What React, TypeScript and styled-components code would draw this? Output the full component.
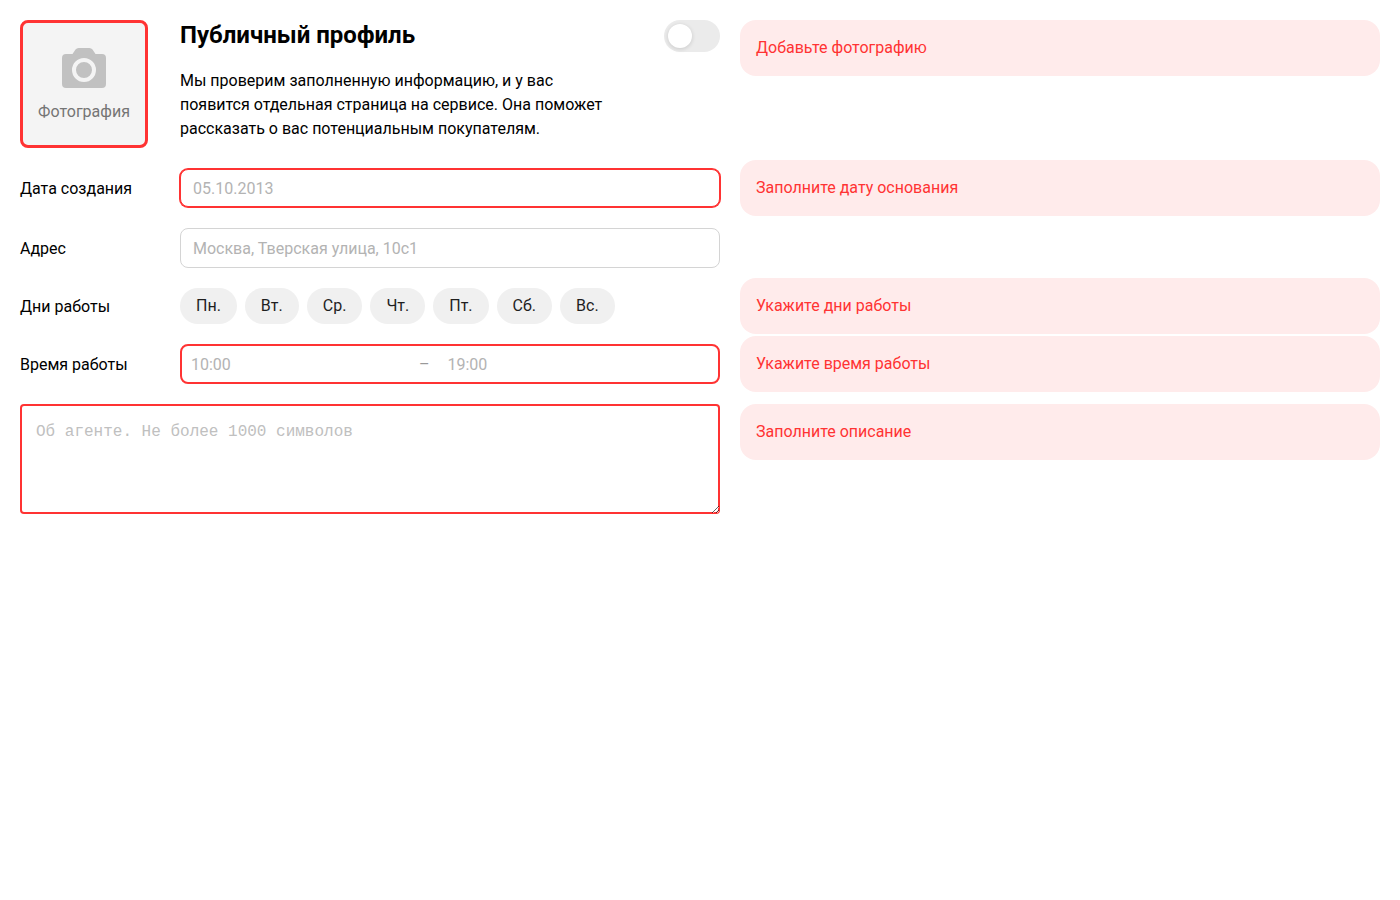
import React, { useState } from "react";
import styled, { createGlobalStyle } from "styled-components";

const red = "#ff3333";

const GlobalStyle = createGlobalStyle`
  *, *::before, *::after { box-sizing: border-box; }
  body {
    margin: 0;
    background: #fff;
    color: #000;
    font: 16px/24px Roboto, "Noto Sans", sans-serif;
  }
  button, input { font: inherit; color: inherit; }
`;

const Form = styled.form`
  display: flex;
  flex-direction: column;
  gap: 20px;
  padding: 20px;
`;

const Row = styled.div<{ $top?: boolean }>`
  display: grid;
  grid-template-columns: minmax(0, 700px) minmax(0, 1fr);
  column-gap: 20px;
  align-items: ${(p) => (p.$top ? "start" : "center")};
`;

const Field = styled.div<{ $top?: boolean }>`
  display: grid;
  grid-template-columns: 160px minmax(0, 1fr);
  align-items: ${(p) => (p.$top ? "start" : "center")};
`;

const Label = styled.label`
  padding-top: 2px;
`;

const Hint = styled.p<{ $overhang?: boolean }>`
  margin: ${(p) => (p.$overhang ? "-10px 0" : "0")};
  padding: 16px;
  border-radius: 16px;
  background: #ffebeb;
  color: ${red};
`;

const PhotoButton = styled.button`
  display: flex;
  flex-direction: column;
  align-items: center;
  gap: 12px;
  width: 128px;
  height: 128px;
  padding: 25px 0 0;
  border: 3px solid ${red};
  border-radius: 8px;
  background: #f4f4f4;
  color: #757575;
  cursor: pointer;
`;

const About = styled.div`
  display: flex;
  justify-content: space-between;
  align-items: flex-start;
`;

const Title = styled.h2`
  margin: 0 0 19px;
  font-size: 24px;
  line-height: 30px;
  font-weight: 700;
`;

const Description = styled.p`
  max-width: 430px;
  margin: 0;
`;

const Toggle = styled.input`
  appearance: none;
  flex: none;
  width: 56px;
  height: 32px;
  margin: 0;
  padding: 4px;
  border-radius: 16px;
  background: #ebebeb;
  cursor: pointer;

  &::before {
    content: "";
    display: block;
    width: 24px;
    height: 24px;
    border-radius: 50%;
    background: #fff;
    box-shadow: 0 1px 4px rgba(0, 0, 0, 0.15);
  }
  &:checked { background: #ffdb4d; }
  &:checked::before { margin-left: 24px; }
`;

const TextInput = styled.input<{ $invalid?: boolean }>`
  width: 100%;
  height: ${(p) => (p.$invalid ? "38px" : "40px")};
  margin: ${(p) => (p.$invalid ? "1px 0" : "0")};
  padding: 0 12px;
  border: 1px solid ${(p) => (p.$invalid ? red : "#d4d4d4")};
  border-radius: 8px;
  box-shadow: ${(p) => (p.$invalid ? `0 0 0 1px ${red}` : "none")};
  outline: none;

  &::placeholder { color: #b3b3b3; }
`;

const Days = styled.div`
  display: flex;
  flex-wrap: wrap;
  gap: 8px;
`;

const Day = styled.button`
  height: 36px;
  padding: 0 16px;
  border: 0;
  border-radius: 18px;
  background: #f0f0f0;
  color: #1f1f1f;
  cursor: pointer;

  &[aria-pressed="true"] { background: #ffdb4d; }
`;

const TimeRange = styled.div`
  display: flex;
  align-items: center;
  gap: 10px;
  height: 40px;
  padding: 0 9px;
  border: 2px solid ${red};
  border-radius: 8px;
  color: #999;
`;

const TimeSeparator = styled.span`
  padding-top: 2px;
`;

const TimeInput = styled.input`
  width: 218px;
  min-width: 0;
  height: 32px;
  padding: 0;
  border: 0;
  outline: none;
  background: none;
  color: #000;

  ${TimeSeparator} + & { margin-left: 8px; }
  &::placeholder { color: #b3b3b3; }
`;

const Bio = styled.textarea`
  display: block;
  width: 100%;
  height: 110px;
  padding: 16px;
  border: 0;
  border-radius: 4px;
  box-shadow: inset 0 0 0 2px ${red};
  outline: none;
  font: 16px/24px "Liberation Mono", monospace;

  &::placeholder { color: #c0c0c0; }
`;

const weekDays = ["Пн.", "Вт.", "Ср.", "Чт.", "Пт.", "Сб.", "Вс."];

function CameraIcon() {
  return (
    <svg width="44" height="40" viewBox="0 0 44 40" aria-hidden="true">
      <path
        fill="#c1c1c1"
        d="M4 6h6.500l3-4.400A4 4 0 0 1 16.800 0h10.400a4 4 0 0 1 3.300 1.600L33.500 6H40a4 4 0 0 1 4 4v26a4 4 0 0 1-4 4H4a4 4 0 0 1-4-4V10a4 4 0 0 1 4-4z"
      />
      <circle cx="22" cy="22" r="10" fill="#c1c1c1" stroke="#f4f4f4" strokeWidth="4" />
    </svg>
  );
}

export default function App() {
  const [selected, setSelected] = useState<string[]>([]);
  const toggleDay = (day: string) =>
    setSelected((days) => (days.includes(day) ? days.filter((d) => d !== day) : [...days, day]));

  return (
    <>
      <GlobalStyle />
      <Form>
        <Row $top>
          <Field $top>
            <PhotoButton type="button">
              <CameraIcon />
              Фотография
            </PhotoButton>
            <About>
              <div>
                <Title>Публичный профиль</Title>
                <Description>
                  Мы проверим заполненную информацию, и у вас появится отдельная страница на сервисе. Она
                  поможет рассказать о вас потенциальным покупателям.
                </Description>
              </div>
              <Toggle type="checkbox" role="switch" aria-label="Публичный профиль" />
            </About>
          </Field>
          <Hint>Добавьте фотографию</Hint>
        </Row>

        <Row>
          <Field>
            <Label htmlFor="created">Дата создания</Label>
            <TextInput id="created" $invalid placeholder="05.10.2013" />
          </Field>
          <Hint $overhang>Заполните дату основания</Hint>
        </Row>

        <Row>
          <Field>
            <Label htmlFor="address">Адрес</Label>
            <TextInput id="address" placeholder="Москва, Тверская улица, 10с1" />
          </Field>
        </Row>

        <Row>
          <Field role="group" aria-labelledby="days-label">
            <Label as="span" id="days-label">Дни работы</Label>
            <Days>
              {weekDays.map((day) => (
                <Day key={day} type="button" aria-pressed={selected.includes(day)} onClick={() => toggleDay(day)}>
                  {day}
                </Day>
              ))}
            </Days>
          </Field>
          <Hint $overhang>Укажите дни работы</Hint>
        </Row>

        <Row>
          <Field>
            <Label htmlFor="time-from">Время работы</Label>
            <TimeRange>
              <TimeInput id="time-from" placeholder="10:00" />
              <TimeSeparator>–</TimeSeparator>
              <TimeInput aria-label="Время окончания работы" placeholder="19:00" />
            </TimeRange>
          </Field>
          <Hint $overhang>Укажите время работы</Hint>
        </Row>

        <Row $top>
          <Bio aria-label="Об агенте" placeholder="Об агенте. Не более 1000 символов" />
          <Hint>Заполните описание</Hint>
        </Row>
      </Form>
    </>
  );
}
